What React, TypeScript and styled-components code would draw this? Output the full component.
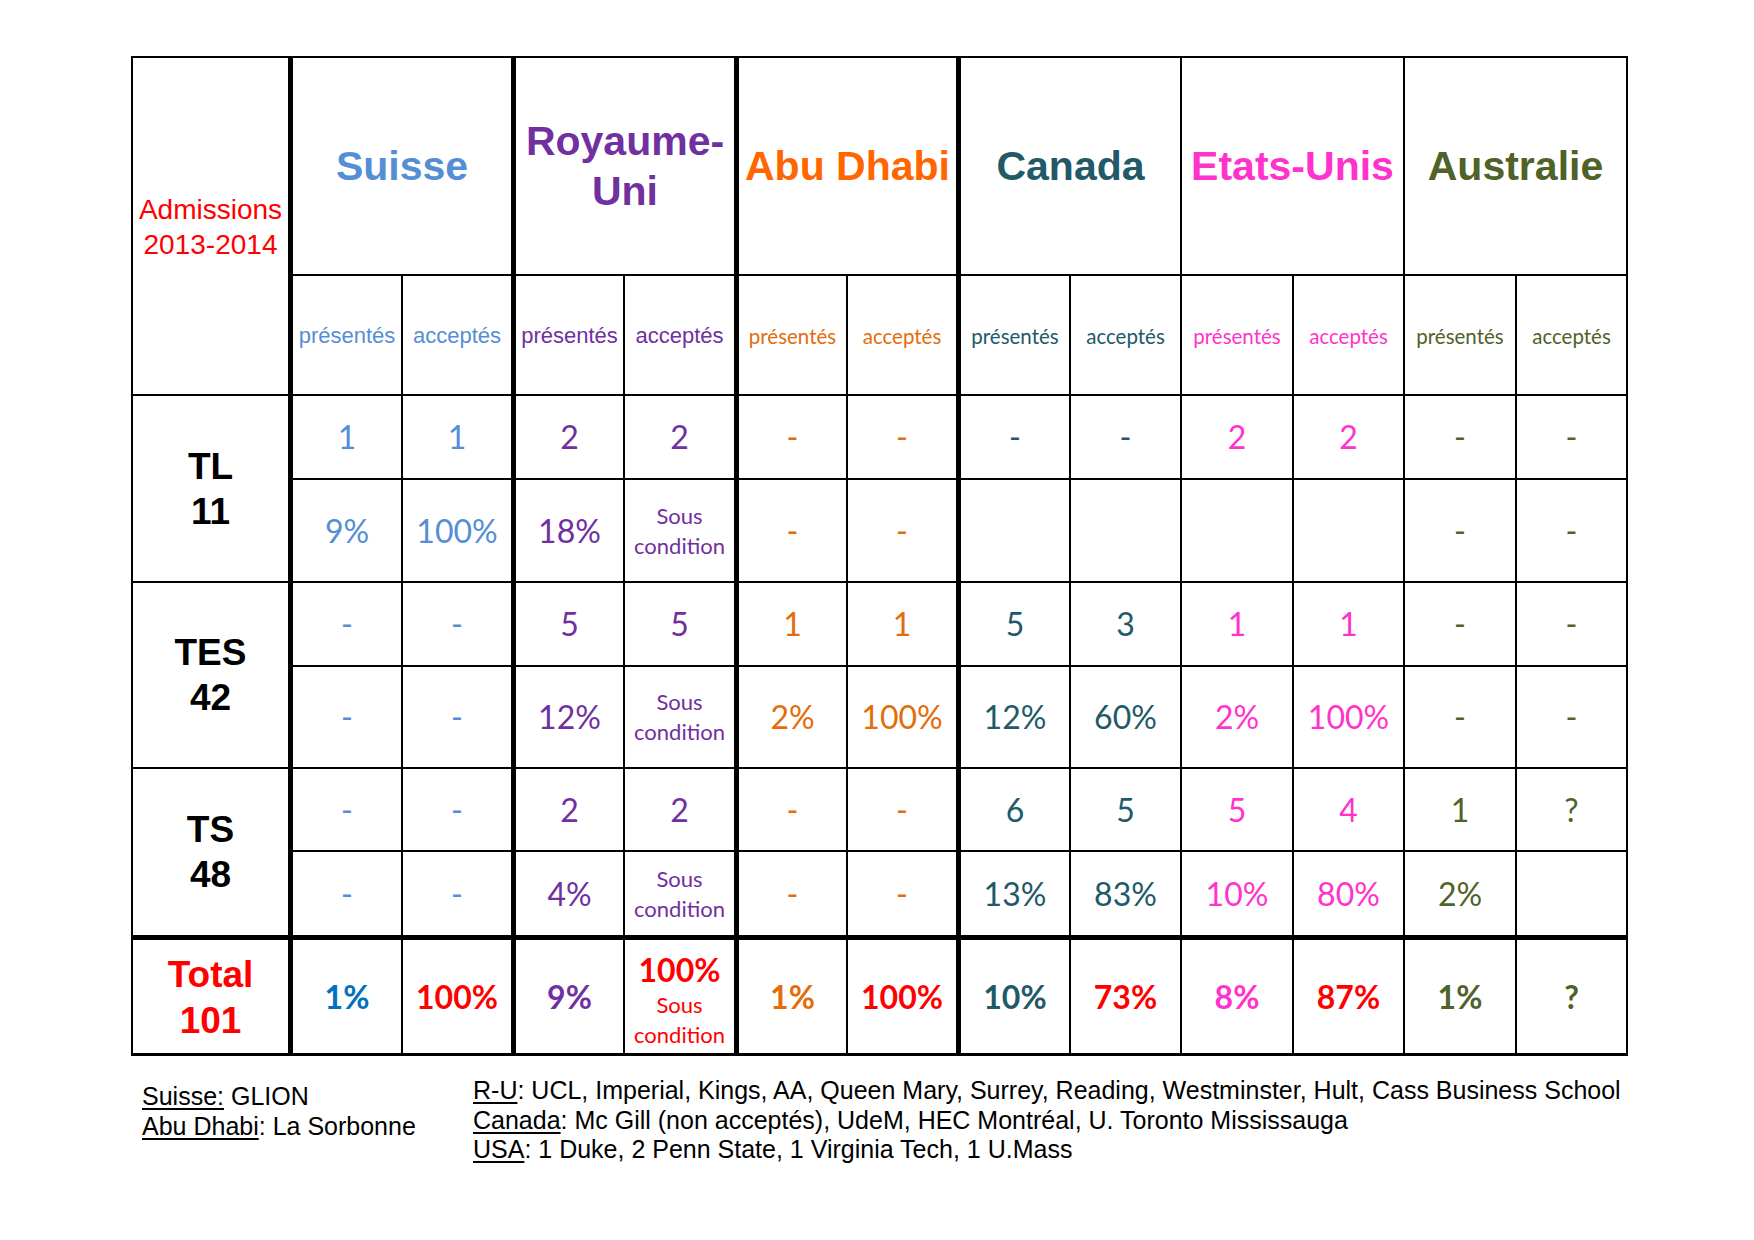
import React from 'react';
import styled, { createGlobalStyle } from 'styled-components';

const ARIAL = `"Liberation Sans", Arial, sans-serif`;
const CALIBRI = `Lato, "Liberation Sans", sans-serif`;

const GlobalStyle = createGlobalStyle`
  html, body { margin: 0; padding: 0; background: #ffffff; }
  body { font-family: ${ARIAL}; color: #000; }
`;

const COLS = [160, 110, 113, 109, 114, 109, 113, 110, 111, 112, 111, 112, 111];
const ROWS = [218, 120, 84, 103, 84, 102, 83, 88, 116];
const RIGHT = [5, 2, 5, 2, 5, 2, 5, 2, 2, 2, 2, 2, 2];

type Country = { name: React.ReactNode; color: string; sub: string; arial: boolean };

const COUNTRIES: Country[] = [
  { name: 'Suisse', color: '#558ED5', sub: '#558ED5', arial: true },
  { name: <>Royaume-<br />Uni</>, color: '#7030A0', sub: '#7030A0', arial: true },
  { name: 'Abu Dhabi', color: '#FF6600', sub: '#E46C0A', arial: false },
  { name: 'Canada', color: '#215968', sub: '#215968', arial: false },
  { name: 'Etats-Unis', color: '#FF33CC', sub: '#FF33CC', arial: false },
  { name: 'Australie', color: '#4F6228', sub: '#4F6228', arial: false },
];

const DATA_COLORS = ['#558ED5', '#7030A0', '#E46C0A', '#215968', '#FF33CC', '#4F6228'];

const SC = 'SC';

type Group = { label: string; count: string; a: string[]; b: string[] };

const GROUPS: Group[] = [
  {
    label: 'TL', count: '11',
    a: ['1', '1', '2', '2', '-', '-', '-', '-', '2', '2', '-', '-'],
    b: ['9%', '100%', '18%', SC, '-', '-', '', '', '', '', '-', '-'],
  },
  {
    label: 'TES', count: '42',
    a: ['-', '-', '5', '5', '1', '1', '5', '3', '1', '1', '-', '-'],
    b: ['-', '-', '12%', SC, '2%', '100%', '12%', '60%', '2%', '100%', '-', '-'],
  },
  {
    label: 'TS', count: '48',
    a: ['-', '-', '2', '2', '-', '-', '6', '5', '5', '4', '1', '?'],
    b: ['-', '-', '4%', SC, '-', '-', '13%', '83%', '10%', '80%', '2%', ''],
  },
];

const TOTALS: { v: string; color: string; cond?: boolean }[] = [
  { v: '1%', color: '#0070C0' },
  { v: '100%', color: '#FF0000' },
  { v: '9%', color: '#7030A0' },
  { v: '100%', color: '#FF0000', cond: true },
  { v: '1%', color: '#E46C0A' },
  { v: '100%', color: '#FF0000' },
  { v: '10%', color: '#215968' },
  { v: '73%', color: '#FF0000' },
  { v: '8%', color: '#FF33CC' },
  { v: '87%', color: '#FF0000' },
  { v: '1%', color: '#4F6228' },
  { v: '?', color: '#4F6228' },
];

const Page = styled.div`
  padding: 56px 0 40px 131px;
`;

const Board = styled.div`
  display: grid;
  grid-template-columns: ${COLS.map((c) => `${c}px`).join(' ')};
  grid-template-rows: ${ROWS.map((r) => `${r}px`).join(' ')};
  width: max-content;
  border-top: 2px solid #000;
  border-left: 2px solid #000;
`;

const Cell = styled.div<{ $r: number; $b: number; $rowSpan?: number; $colSpan?: number }>`
  box-sizing: border-box;
  border-right: ${(p) => p.$r}px solid #000;
  border-bottom: ${(p) => p.$b}px solid #000;
  grid-row: span ${(p) => p.$rowSpan ?? 1};
  grid-column: span ${(p) => p.$colSpan ?? 1};
  display: flex;
  flex-direction: column;
  align-items: center;
  justify-content: center;
  text-align: center;
  white-space: nowrap;
`;

const CornerCell = styled(Cell)`
  color: #ff0000;
  font-family: ${ARIAL};
  font-size: 28px;
  line-height: 35px;
  padding-top: 2px;
`;

const CountryHead = styled(Cell)<{ $color: string }>`
  color: ${(p) => p.$color};
  font-family: ${ARIAL};
  font-weight: bold;
  font-size: 41px;
  line-height: 50px;
`;

const SubHead = styled(Cell)<{ $color: string; $arial: boolean }>`
  color: ${(p) => p.$color};
  font-family: ${(p) => (p.$arial ? ARIAL : CALIBRI)};
  font-size: ${(p) => (p.$arial ? '22px' : '20.5px')};
  padding-top: 1px;
`;

const RowLabel = styled(Cell)`
  color: #000;
  font-family: ${ARIAL};
  font-weight: bold;
  font-size: 37px;
  line-height: 45px;
`;

const DataCell = styled(Cell)<{ $color: string }>`
  color: ${(p) => p.$color};
  font-family: ${CALIBRI};
  font-size: 32px;
  line-height: 36px;
`;

const CondText = styled.span`
  font-family: ${CALIBRI};
  font-size: 22px;
  line-height: 30px;
  font-weight: normal;
`;

const TotalLabel = styled(Cell)`
  color: #ff0000;
  font-family: ${ARIAL};
  font-weight: bold;
  font-size: 37px;
  line-height: 46px;
  padding-top: 3px;
`;

const TotalCell = styled(Cell)<{ $color: string; $stacked: boolean }>`
  color: ${(p) => p.$color};
  font-family: ${CALIBRI};
  font-weight: bold;
  font-size: 32px;
  line-height: ${(p) => (p.$stacked ? '40px' : '36px')};
  padding-top: ${(p) => (p.$stacked ? '6px' : '0')};
`;

const Footer = styled.div`
  display: flex;
  margin-top: 20px;
  font-family: ${ARIAL};
  font-size: 25px;
  line-height: 29.6px;
  color: #000;
`;

const FootLeft = styled.div`
  box-sizing: border-box;
  flex: 0 0 342px;
  padding: 6px 0 0 11px;
`;

const FootRight = styled.div`
  flex: 1 1 auto;
`;

const FootLine = styled.div`
  white-space: nowrap;
`;

const U = styled.span`
  text-decoration: underline;
  text-decoration-thickness: 1.5px;
  text-underline-offset: 3px;
`;

const Cond: React.FC = () => (
  <>
    <CondText>Sous</CondText>
    <CondText>condition</CondText>
  </>
);

export default function App() {
  return (
    <Page>
      <GlobalStyle />
      <Board>
        <CornerCell $r={RIGHT[0]} $b={2} $rowSpan={2}>
          <span>Admissions</span>
          <span>2013-2014</span>
        </CornerCell>
        {COUNTRIES.map((c, i) => (
          <CountryHead key={`h${i}`} $r={RIGHT[i * 2 + 2]} $b={2} $colSpan={2} $color={c.color}>
            <div>{c.name}</div>
          </CountryHead>
        ))}
        {COUNTRIES.flatMap((c, i) => [
          <SubHead key={`p${i}`} $r={RIGHT[i * 2 + 1]} $b={2} $color={c.sub} $arial={c.arial}>
            présentés
          </SubHead>,
          <SubHead key={`a${i}`} $r={RIGHT[i * 2 + 2]} $b={2} $color={c.sub} $arial={c.arial}>
            acceptés
          </SubHead>,
        ])}
        {GROUPS.map((g, gi) => {
          const lastBottom = gi === GROUPS.length - 1 ? 5 : 2;
          return (
            <React.Fragment key={g.label}>
              <RowLabel $r={RIGHT[0]} $b={lastBottom} $rowSpan={2}>
                <span>{g.label}</span>
                <span>{g.count}</span>
              </RowLabel>
              {g.a.map((v, i) => (
                <DataCell key={`a${i}`} $r={RIGHT[i + 1]} $b={2} $color={DATA_COLORS[Math.floor(i / 2)]}>
                  {v}
                </DataCell>
              ))}
              {g.b.map((v, i) => (
                <DataCell key={`b${i}`} $r={RIGHT[i + 1]} $b={lastBottom} $color={DATA_COLORS[Math.floor(i / 2)]}>
                  {v === SC ? <Cond /> : v}
                </DataCell>
              ))}
            </React.Fragment>
          );
        })}
        <TotalLabel $r={RIGHT[0]} $b={3}>
          <span>Total</span>
          <span>101</span>
        </TotalLabel>
        {TOTALS.map((t, i) => (
          <TotalCell key={`t${i}`} $r={RIGHT[i + 1]} $b={3} $color={t.color} $stacked={!!t.cond}>
            <span>{t.v}</span>
            {t.cond && <Cond />}
          </TotalCell>
        ))}
      </Board>
      <Footer>
        <FootLeft>
          <FootLine>
            <U>Suisse:</U> GLION
          </FootLine>
          <FootLine>
            <U>Abu Dhabi</U>: La Sorbonne
          </FootLine>
        </FootLeft>
        <FootRight>
          <FootLine>
            <U>R-U</U>: UCL, Imperial, Kings, AA, Queen Mary, Surrey, Reading, Westminster, Hult, Cass Business School
          </FootLine>
          <FootLine>
            <U>Canada</U>: Mc Gill (non acceptés), UdeM, HEC Montréal, U. Toronto Mississauga
          </FootLine>
          <FootLine>
            <U>USA</U>: 1 Duke, 2 Penn State, 1 Virginia Tech, 1 U.Mass
          </FootLine>
        </FootRight>
      </Footer>
    </Page>
  );
}
